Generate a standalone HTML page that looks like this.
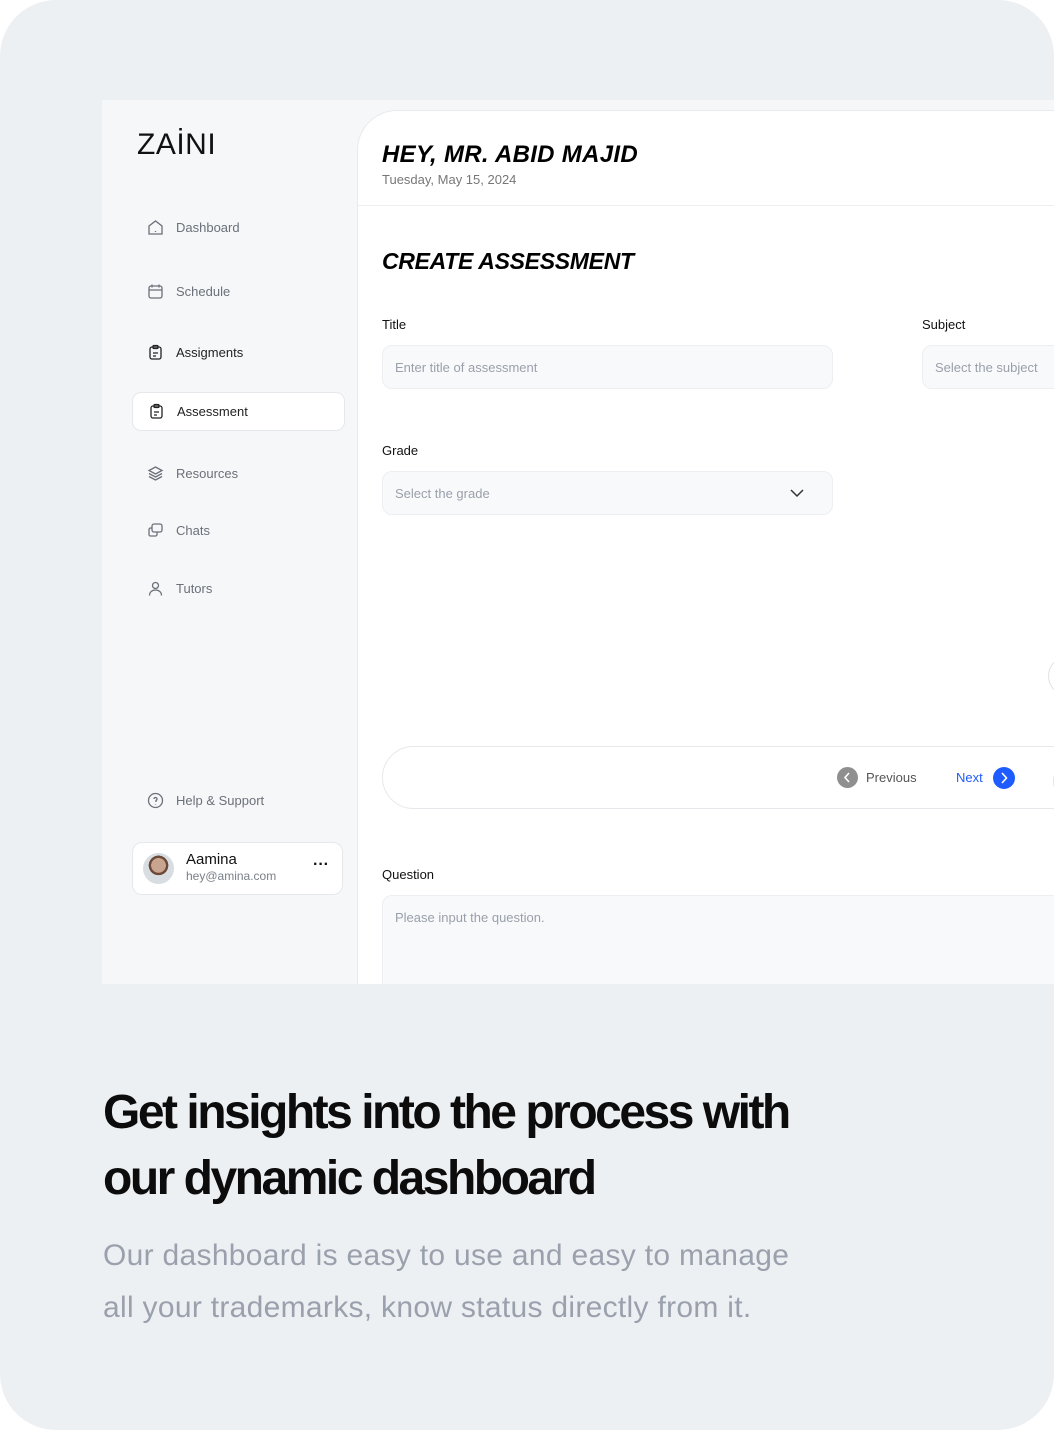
<!DOCTYPE html>
<html><head><style>
*{margin:0;padding:0;box-sizing:border-box}
body{width:1054px;height:1430px;background:#fff;font-family:"Liberation Sans",sans-serif;position:relative;overflow:hidden}
.card{position:absolute;left:0;top:0;width:1054px;height:1430px;background:#edf0f3;border-radius:56px;overflow:hidden}
.shot{position:absolute;left:102px;top:100px;width:952px;height:884px;background:#f6f7f9;overflow:hidden}
.logo{position:absolute;left:35px;top:28px;font-size:30px;letter-spacing:0.5px;color:#111}
.nav{position:absolute;left:30px;width:213px;height:39px;display:flex;align-items:center;padding-left:15px;font-size:13px;color:#6b7079}
.nav svg{width:17px;height:17px;margin-right:12px;fill:none;stroke:#6b7079;stroke-width:1.3}
.nav.dark{color:#222}.nav.dark svg{stroke:#222}
.nav.act{background:#fff;border:1px solid #e6e8eb;border-radius:9px}
.user{position:absolute;left:30px;top:742px;width:211px;height:53px;background:#fff;border:1px solid #e6e8eb;border-radius:10px}
.main{position:absolute;left:255px;top:10px;width:720px;height:900px;background:#fff;border-top-left-radius:40px;border-left:1px solid #e8eaed;border-top:1px solid #e8eaed}
.h1{position:absolute;left:24px;top:30px;font-size:24px;font-weight:bold;letter-spacing:0.3px;color:#000;font-style:italic}
.date{position:absolute;left:24px;top:61px;font-size:13px;color:#777}
.hr{position:absolute;left:0;top:94px;width:720px;height:1px;background:#eceef0}
.h2{position:absolute;left:24px;top:137px;font-size:23px;font-weight:bold;letter-spacing:-0.3px;font-style:italic}
.lbl{position:absolute;font-size:13px;color:#111}
.inp{position:absolute;height:44px;background:#f8f9fb;border:1px solid #eceef1;border-radius:10px;font-size:13px;color:#9aa0aa;padding:14px 12px}
.pager{position:absolute;left:24px;top:635px;width:720px;height:63px;border:1px solid #e6e8eb;border-radius:32px}
.h3{position:absolute;left:103px;top:1080px;font-size:48px;font-weight:bold;letter-spacing:-2.5px;line-height:66px;color:#0c0c0c}
.p{position:absolute;left:103px;top:1230px;font-size:30px;line-height:52px;color:#9aa1ad;letter-spacing:0.3px}
</style></head><body>
<div class="card">
<div class="shot">
 <div class="logo">ZAİNI</div>
 <div class="nav" style="top:108px"><svg viewBox="0 0 17 17"><path d="M2 7l6.5-5 6.5 5v8H2z"/><path d="M8.5 12v1"/></svg>Dashboard</div>
 <div class="nav" style="top:172px"><svg viewBox="0 0 17 17"><rect x="2" y="3" width="13" height="12" rx="2"/><path d="M2 7h13M5 1.5v3M12 1.5v3"/></svg>Schedule</div>
 <div class="nav dark" style="top:233px"><svg viewBox="0 0 17 17"><rect x="3" y="3" width="11" height="12" rx="2"/><rect x="6" y="1.5" width="5" height="3" rx="1"/><path d="M6 9h5M6 12h3"/></svg>Assigments</div>
 <div class="nav dark act" style="top:292px"><svg viewBox="0 0 17 17"><rect x="3" y="3" width="11" height="12" rx="2"/><rect x="6" y="1.5" width="5" height="3" rx="1"/><path d="M6 9h5M6 12h3"/></svg>Assessment</div>
 <div class="nav" style="top:354px"><svg viewBox="0 0 17 17"><path d="M8.5 2l6.5 3.5-6.5 3.5-6.5-3.5z"/><path d="M2 8.5l6.5 3.5 6.5-3.5M2 11.5l6.5 3.5 6.5-3.5"/></svg>Resources</div>
 <div class="nav" style="top:411px"><svg viewBox="0 0 17 17"><rect x="5" y="2" width="10" height="8" rx="2"/><path d="M5 6H3.5A1.5 1.5 0 0 0 2 7.5v5a1.5 1.5 0 0 0 1.5 1.5h5A1.5 1.5 0 0 0 10 12.5V10"/></svg>Chats</div>
 <div class="nav" style="top:469px"><svg viewBox="0 0 17 17"><circle cx="8.5" cy="5.5" r="3"/><path d="M2.5 15.5c0-3.5 2.7-5.5 6-5.5s6 2 6 5.5"/></svg>Tutors</div>
 <div class="nav" style="top:681px"><svg viewBox="0 0 17 17"><circle cx="8.5" cy="8.5" r="7"/><path d="M7 7a1.5 1.5 0 1 1 2 1.4V10M8.5 12v.5"/></svg>Help &amp; Support</div>
 <div class="user">
  <div style="position:absolute;left:10px;top:10px;width:31px;height:31px;border-radius:50%;background:radial-gradient(circle at 50% 40%,#c9a58f 0 30%,#6b4a3a 31% 40%,#d8dde2 41%)"></div>
  <div style="position:absolute;left:53px;top:8px;font-size:15px;color:#111">Aamina</div>
  <div style="position:absolute;left:53px;top:26px;font-size:12px;color:#7a7f88">hey@amina.com</div>
  <div style="position:absolute;left:180px;top:13px;font-size:16px;font-weight:bold;color:#111">···</div>
 </div>
 <div class="main">
  <div class="h1">HEY, MR. ABID MAJID</div>
  <div class="date">Tuesday, May 15, 2024</div>
  <div class="hr"></div>
  <div class="h2">CREATE ASSESSMENT</div>
  <div class="lbl" style="left:24px;top:206px">Title</div>
  <div class="inp" style="left:24px;top:234px;width:451px">Enter title of assessment</div>
  <div class="lbl" style="left:564px;top:206px">Subject</div>
  <div class="inp" style="left:564px;top:234px;width:200px">Select the subject</div>
  <div class="lbl" style="left:24px;top:332px">Grade</div>
  <div class="inp" style="left:24px;top:360px;width:451px">Select the grade<svg style="position:absolute;right:28px;top:16px" width="14" height="10" viewBox="0 0 14 10"><path d="M1 2l6 6 6-6" fill="none" stroke="#333" stroke-width="1.5"/></svg></div>
  <div style="position:absolute;left:690px;top:545px;width:40px;height:40px;border:1px solid #e0e2e5;border-radius:50%"></div>
  <div class="pager">
   <div style="position:absolute;left:454px;top:20px;width:21px;height:21px;border-radius:50%;background:#8f8f8f"><svg width="21" height="21" viewBox="0 0 21 21"><path d="M12 6l-4 4.5 4 4.5" fill="none" stroke="#fff" stroke-width="1.6"/></svg></div>
   <div style="position:absolute;left:483px;top:23px;font-size:13px;color:#555">Previous</div>
   <div style="position:absolute;left:573px;top:23px;font-size:13px;color:#1f5cff">Next</div>
   <div style="position:absolute;left:610px;top:20px;width:22px;height:22px;border-radius:50%;background:#1f5cff"><svg width="22" height="22" viewBox="0 0 22 22"><path d="M9 6l4.5 5-4.5 5" fill="none" stroke="#fff" stroke-width="1.6"/></svg></div>
   <div style="position:absolute;left:670px;top:14px;width:40px;height:40px;border:1px solid #e0e2e5;border-radius:50%"></div>
  </div>
  <div class="lbl" style="left:24px;top:756px">Question</div>
  <div class="inp" style="left:24px;top:784px;width:700px;height:120px">Please input the question.</div>
 </div>
</div>
<div class="h3">Get insights into the process with<br>our dynamic dashboard</div>
<div class="p">Our dashboard is easy to use and easy to manage<br>all your trademarks, know status directly from it.</div>
</div>
</body></html>
